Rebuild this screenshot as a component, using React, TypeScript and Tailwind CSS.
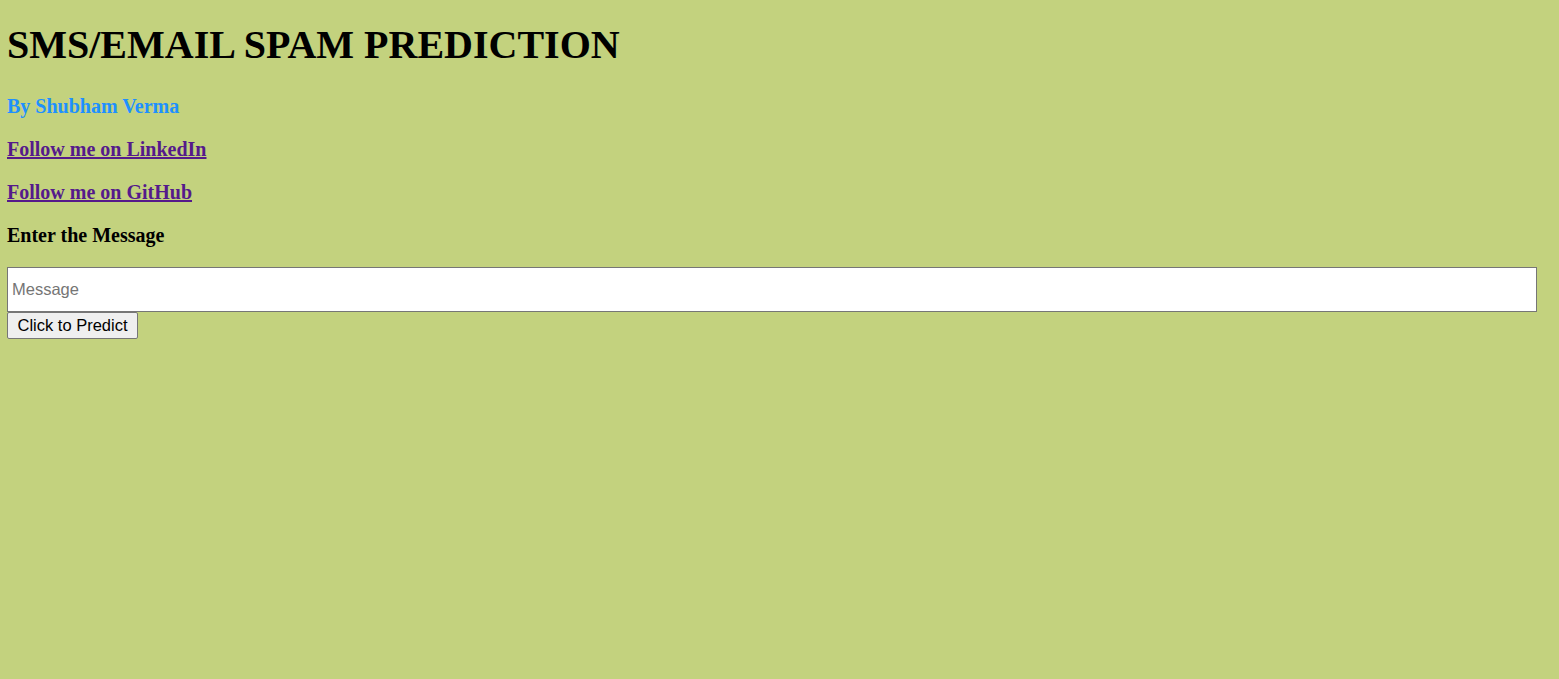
export default function App() {
  return (
    <div
      className="min-h-screen bg-[#c3d27e] pl-[7px] pr-2 pt-[23px] text-black"
      style={{ fontFamily: '"Liberation Serif", "Times New Roman", serif' }}
    >
      <h1 className="text-[40px] font-bold leading-[44px] mb-[28px]">
        SMS/EMAIL SPAM PREDICTION
      </h1>
      <h3 className="text-[20px] font-bold leading-[23px] text-[#1e90ff] mb-[20px]">
        By Shubham Verma
      </h3>
      <h3 className="text-[20px] font-bold leading-[23px] mb-[20px]">
        <a href="#" className="text-[#551a8b] underline">
          Follow me on LinkedIn
        </a>
      </h3>
      <h3 className="text-[20px] font-bold leading-[23px] mb-[20px]">
        <a href="#" className="text-[#551a8b] underline">
          Follow me on GitHub
        </a>
      </h3>
      <h3 className="text-[20px] font-bold leading-[23px] mb-[20px]">
        Enter the Message
      </h3>
      <form
        className="flex flex-col items-start"
        style={{ fontFamily: '"Liberation Sans", Arial, sans-serif' }}
      >
        <input
          type="text"
          placeholder="Message"
          className="w-[1530px] h-[45px] bg-white border border-[#767676] px-1 text-[16.5px] placeholder:text-[#757575] outline-none"
        />
        <button
          type="button"
          className="h-[27px] px-[9.5px] bg-[#efefef] border border-[#767676] rounded-[2px] text-[16.5px] text-black"
        >
          Click to Predict
        </button>
      </form>
    </div>
  )
}
